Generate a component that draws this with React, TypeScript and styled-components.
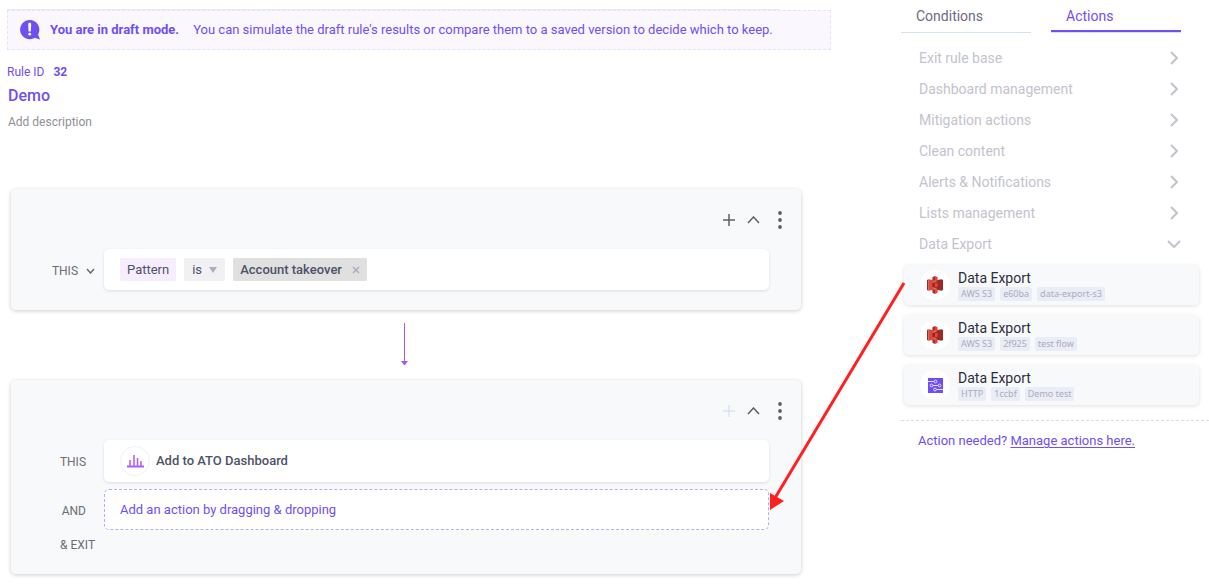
import React from "react";
import styled, { createGlobalStyle, css } from "styled-components";

const Global = createGlobalStyle`
  *, *::before, *::after { box-sizing: border-box; }
  body { margin: 0; background: #fff; color: #4c5366; font: 13px/20px Roboto, sans-serif; }
  button, input, select { font: inherit; color: inherit; }
  button { border: 0; padding: 0; background: none; cursor: pointer; }
  h1, h2, p, ul { margin: 0; padding: 0; }
  ul { list-style: none; }
  svg { display: block; flex: none; }
`;

const Page = styled.div`
  display: flex;
  align-items: flex-start;
`;

const Main = styled.main`
  flex: 1;
  min-width: 0;
  padding: 9px 70px 8px 7px;
`;

const TopRule = styled.div`
  height: 1px;
  margin-right: 52px;
  background: #e8e5f4;
`;

const Banner = styled.div`
  display: flex;
  align-items: center;
  gap: 10px;
  height: 40px;
  padding: 0 12px;
  color: #6f4ff2;
  background: #faf7fe;
  border: 1px dashed #eadffa;
  white-space: nowrap;
  strong { padding-right: 4px; }
`;

const RuleHeader = styled.header`
  display: flex;
  flex-direction: column;
  padding: 14px 0 0;
`;

const RuleId = styled.p`
  display: flex;
  gap: 9px;
  font-size: 12px;
  line-height: 16px;
  color: #6f4ff2;
`;

const RuleName = styled.h1`
  padding: 6px 1px 0;
  font-size: 16px;
  line-height: 20px;
  font-weight: 500;
  color: #6f4ff2;
`;

const Description = styled.p`
  padding: 8px 1px 59px;
  font-size: 12px;
  line-height: 16px;
  color: #8f9096;
`;

const Canvas = styled.div`
  display: flex;
  flex-direction: column;
  margin: 0 30px 0 4px;
`;

const Panel = styled.section`
  display: flex;
  flex-direction: column;
  gap: 7px;
  padding: 20px 32px 20px 0;
  background: #f8f9fb;
  border-radius: 5px;
  box-shadow: 0 1px 4px rgba(0, 0, 0, 0.2);
`;

const Toolbar = styled.div`
  display: flex;
  justify-content: flex-end;
  align-items: center;
  margin: 0 -23px 11px 0;
  height: 22px;
  color: #5f6064;
`;

const ToolButton = styled.button<{ $faded?: boolean }>`
  display: flex;
  justify-content: center;
  width: 24px;
  color: ${(p) => (p.$faded ? "#dbe2f3" : "#5f6064")};
  &:last-child { margin-left: 3px; }
`;

const Row = styled.div`
  display: grid;
  grid-template-columns: 93px 1fr;
  align-items: center;
`;

const RowLabel = styled.div<{ $pad: number }>`
  display: flex;
  align-items: center;
  gap: 8px;
  padding: 2px ${(p) => p.$pad}px 0 0;
  justify-content: flex-end;
  font-size: 12px;
  line-height: 16px;
  color: #6b6d72;
  white-space: nowrap;
`;

const box = css`
  display: flex;
  align-items: center;
  padding: 0 16px;
  border-radius: 5px;
  background: #fff;
`;

const ConditionBox = styled.div`
  ${box}
  gap: 8px;
  height: 41px;
  box-shadow: 0 1px 3px rgba(0, 0, 0, 0.12);
`;

const ActionBox = styled.div`
  ${box}
  gap: 6px;
  height: 42px;
  font-weight: 500;
  box-shadow: 0 1px 3px rgba(0, 0, 0, 0.12);
`;

const DropZone = styled.div`
  ${box}
  height: 41px;
  padding: 0 15px;
  border: 1px dashed #bba8f8;
  color: #6f4ff2;
`;

const Chip = styled.span<{ $tone: string; $strong?: boolean }>`
  display: flex;
  align-items: center;
  height: 23px;
  gap: 10px;
  padding: 0 7px;
  border-radius: 2px;
  font-weight: ${(p) => (p.$strong ? 500 : 400)};
  background: ${(p) => p.$tone};
`;

const OperatorChip = styled(Chip)`
  padding: 0 8px;
  gap: 7px;
`;

const Operator = styled.select`
  appearance: none;
  border: 0;
  padding: 0;
  width: 10px;
  background: transparent;
`;

const ExitLabel = styled.p`
  padding: 0 0 1px 49px;
  font-size: 12px;
  line-height: 16px;
  color: #6b6d72;
`;

const Connector = styled.div`
  display: flex;
  justify-content: center;
  padding: 13px 3px 14px 0;
`;

const IconDisc = styled.span<{ $outlined?: boolean }>`
  display: flex;
  align-items: center;
  justify-content: center;
  width: 30px;
  height: 30px;
  border-radius: 50%;
  background: #fff;
  border: ${(p) => (p.$outlined ? "1px solid #f1f2f5" : "0")};
`;

const Sidebar = styled.aside`
  position: relative;
  flex: 0 0 308px;
`;

const Tabs = styled.div`
  display: flex;
  gap: 20px;
`;

const Tab = styled.button<{ $active?: boolean }>`
  width: 130px;
  height: 33px;
  padding: 0 15px 1px;
  text-align: left;
  font-size: 14px;
  color: ${(p) => (p.$active ? "#6f4ff2" : "#6c6b85")};
  border-bottom: 1px solid #d5e0f5;
  box-shadow: ${(p) => (p.$active ? "inset 0 -2px #6f4ff2" : "none")};
`;

const Categories = styled.ul`
  padding: 9px 28px 6px 18px;
`;

const Category = styled.button`
  display: flex;
  justify-content: space-between;
  align-items: center;
  width: 100%;
  height: 31px;
  font-size: 14px;
  color: #c3c3cd;
`;

const ChevronBox = styled.span`
  display: flex;
  justify-content: center;
  width: 14px;
`;

const Exports = styled.ul`
  display: flex;
  flex-direction: column;
  gap: 10px;
  padding: 0 10px 15px 3px;
`;

const ExportCard = styled.li`
  display: flex;
  align-items: center;
  gap: 8px;
  height: 40px;
  padding: 0 16px;
  background: #f8f9fb;
  border-radius: 5px;
  box-shadow: 0 1px 4px rgba(0, 0, 0, 0.12);
`;

const ExportTitle = styled.h2`
  font-size: 14px;
  line-height: 18px;
  font-weight: 400;
  color: #2c2d3c;
`;

const Tags = styled.div`
  display: flex;
  gap: 5px;
`;

const Tag = styled.span`
  padding: 0 3px;
  font-family: "Noto Sans", sans-serif;
  font-size: 9px;
  line-height: 14px;
  border-radius: 2px;
  color: #a9adbd;
  background: #eaecf6;
`;

const Footer = styled.p`
  padding: 10px 17px;
  border-top: 1px dashed #d3e0f0;
  color: #6f4ff2;
  a { color: inherit; text-underline-offset: 2px; }
`;

const DragArrow = styled.svg`
  position: absolute;
  top: 276px;
  left: -140px;
  pointer-events: none;
`;

const AlertIcon = () => (
  <svg width="20" height="20" viewBox="0 0 20 20" fill="#6f4ff2" aria-hidden="true">
    <path d="M9.7 0a9.6 9.6 0 1 0 5 17.8L20 19.4l-1.9-4.9A9.7 9.7 0 0 0 9.7 0Z" />
    <path d="M8.2 4.2a1.3 1.3 0 0 1 1.3-1.4h.4a1.3 1.3 0 0 1 1.3 1.4l-.4 7.4H8.6Z" fill="#fff" />
    <circle cx="9.7" cy="14.2" r="1.4" fill="#fff" />
  </svg>
);

const Chevron = ({ dir, w, h, stroke = 2 }: { dir: "up" | "down" | "right"; w: number; h: number; stroke?: number }) => {
  const d = {
    up: `M1 ${h - 1}L${w / 2} 1L${w - 1} ${h - 1}`,
    down: `M1 1L${w / 2} ${h - 1}L${w - 1} 1`,
    right: `M1 1L${w - 1} ${h / 2}L1 ${h - 1}`,
  }[dir];
  return (
    <svg width={w} height={h} viewBox={`0 0 ${w} ${h}`} fill="none" stroke="currentColor" strokeWidth={stroke} aria-hidden="true">
      <path d={d} />
    </svg>
  );
};

const S3Icon = () => (
  <svg width="16" height="18" viewBox="0 0 16 18" aria-hidden="true">
    <path d="M0 4 1.5 3.2v11.6L0 14Z" fill="#8c3123" />
    <path d="M1.5 3.2 8 4.6v8.8l-6.5 1.4Z" fill="#e0473d" />
    <path d="M14.5 3.2 8 4.6v8.8l6.5 1.4L16 14V4Z" fill="#9c2a22" />
    <path d="M5.4 1.3 8 0v4.8l-2.6-.6ZM5.4 13.8l2.6-.6V18l-2.6-1.3Z" fill="#a3322a" />
    <path d="m8 0 2.6 1.3v2.9L8 4.8ZM8 13.2l2.6.6v2.9L8 18Z" fill="#e0473d" />
    <path d="M5.4 7.2 8 6.8v4.4l-2.6-.4Z" fill="#8c2a22" />
    <path d="m8 6.8 2.6.4v3.6l-2.6.4Z" fill="#e0473d" />
    <path d="m5.4 5.6 2.6-.5 2.6.5L8 6.1ZM5.4 12.4l2.6-.5 2.6.5-2.6.5Z" fill="#e8766d" />
  </svg>
);

const HttpIcon = () => (
  <svg width="15" height="15" viewBox="0 0 15 15" fill="none" stroke="#e4dcff" aria-hidden="true">
    <rect width="15" height="15" fill="#6f4ff2" stroke="none" />
    <path d="M0 3.5h6.1M4.9 7.5h5.2M8.5 11.5H15" />
    <circle cx="7.5" cy="3.5" r="1.4" />
    <circle cx="3.5" cy="7.5" r="1.4" />
    <circle cx="11.5" cy="7.5" r="1.4" />
    <circle cx="7" cy="11.5" r="1.4" />
  </svg>
);

const ChartIcon = () => (
  <svg width="17" height="13" viewBox="0 0 17 13" fill="none" stroke="#b05cf5" strokeWidth="1.5" aria-hidden="true">
    <path d="M0 11.5h17" strokeWidth="2" />
    <path d="M3 11V5M7 11V0M10.5 11V3M14 11V6" />
  </svg>
);

const PanelToolbar = ({ faded }: { faded?: boolean }) => (
  <Toolbar>
    <ToolButton $faded={faded} disabled={faded} aria-label="Add">
      <svg width="12" height="12" viewBox="0 0 12 12" stroke="currentColor" strokeWidth="1.5">
        <path d="M6 0v12M0 6h12" />
      </svg>
    </ToolButton>
    <ToolButton aria-label="Collapse">
      <Chevron dir="up" w={13} h={8} stroke={1.5} />
    </ToolButton>
    <ToolButton aria-label="More options">
      <svg width="4" height="18" viewBox="0 0 4 18" fill="currentColor">
        <circle cx="2" cy="2" r="1.9" />
        <circle cx="2" cy="9" r="1.9" />
        <circle cx="2" cy="16" r="1.9" />
      </svg>
    </ToolButton>
  </Toolbar>
);

const categories = [
  "Exit rule base",
  "Dashboard management",
  "Mitigation actions",
  "Clean content",
  "Alerts & Notifications",
  "Lists management",
  "Data Export",
];

const exportsList = [
  { icon: <S3Icon />, tags: ["AWS S3", "e60ba", "data-export-s3"] },
  { icon: <S3Icon />, tags: ["AWS S3", "2f925", "test flow"] },
  { icon: <HttpIcon />, tags: ["HTTP", "1ccbf", "Demo test"] },
];

export default function App() {
  return (
    <Page>
      <Global />
      <Main>
        <TopRule />
        <Banner>
          <AlertIcon />
          <strong>You are in draft mode.</strong>
          <span>You can simulate the draft rule's results or compare them to a saved version to decide which to keep.</span>
        </Banner>
        <RuleHeader>
          <RuleId>
            Rule ID <strong>32</strong>
          </RuleId>
          <RuleName>Demo</RuleName>
          <Description>Add description</Description>
        </RuleHeader>
        <Canvas>
          <Panel>
            <PanelToolbar />
            <Row>
              <RowLabel $pad={9}>
                THIS <Chevron dir="down" w={9} h={6} stroke={1.5} />
              </RowLabel>
              <ConditionBox>
                <Chip $tone="#f6edfe">Pattern</Chip>
                <OperatorChip $tone="#f1f1f3">
                  <Operator aria-label="Operator">
                    <option>is</option>
                  </Operator>
                  <svg width="8" height="6" viewBox="0 0 8 6" fill="#aab0c0">
                    <path d="M0 0h8L4 6Z" />
                  </svg>
                </OperatorChip>
                <Chip $tone="#e0e0e0" $strong>
                  Account takeover
                  <button aria-label="Remove Account takeover">
                    <svg width="8" height="8" viewBox="0 0 8 8" stroke="#a9aebd" strokeWidth="1.5">
                      <path d="m1 1 6 6M7 1 1 7" />
                    </svg>
                  </button>
                </Chip>
              </ConditionBox>
            </Row>
          </Panel>
          <Connector>
            <svg width="7" height="43" viewBox="0 0 7 43" fill="#a855f7" aria-hidden="true">
              <path d="M3 0h1v38h3L4 42H3L0 38h3Z" />
            </svg>
          </Connector>
          <Panel>
            <PanelToolbar faded />
            <Row>
              <RowLabel $pad={18}>THIS</RowLabel>
              <ActionBox>
                <IconDisc $outlined>
                  <ChartIcon />
                </IconDisc>
                Add to ATO Dashboard
              </ActionBox>
            </Row>
            <Row>
              <RowLabel $pad={18}>AND</RowLabel>
              <DropZone>Add an action by dragging &amp; dropping</DropZone>
            </Row>
            <ExitLabel>&amp; EXIT</ExitLabel>
          </Panel>
        </Canvas>
      </Main>
      <Sidebar>
        <Tabs role="tablist">
          <Tab role="tab" aria-selected={false}>Conditions</Tab>
          <Tab role="tab" aria-selected $active>Actions</Tab>
        </Tabs>
        <Categories>
          {categories.map((name) => (
            <li key={name}>
              <Category>
                {name}
                <ChevronBox>
                  {name === "Data Export" ? <Chevron dir="down" w={14} h={8} /> : <Chevron dir="right" w={8} h={14} />}
                </ChevronBox>
              </Category>
            </li>
          ))}
        </Categories>
        <Exports>
          {exportsList.map(({ icon, tags }) => (
            <ExportCard key={tags[1]}>
              <IconDisc>{icon}</IconDisc>
              <div>
                <ExportTitle>Data Export</ExportTitle>
                <Tags>
                  {tags.map((tag) => (
                    <Tag key={tag}>{tag}</Tag>
                  ))}
                </Tags>
              </div>
            </ExportCard>
          ))}
        </Exports>
        <Footer>
          Action needed? <a href="#actions">Manage actions here.</a>
        </Footer>
        <DragArrow width="150" height="240" viewBox="0 0 150 240" aria-hidden="true">
          <path d="M143 7 14 222" stroke="#ff2020" strokeWidth="3" />
          <path d="M9 234V217L23 225Z" fill="#ff2020" />
        </DragArrow>
      </Sidebar>
    </Page>
  );
}
